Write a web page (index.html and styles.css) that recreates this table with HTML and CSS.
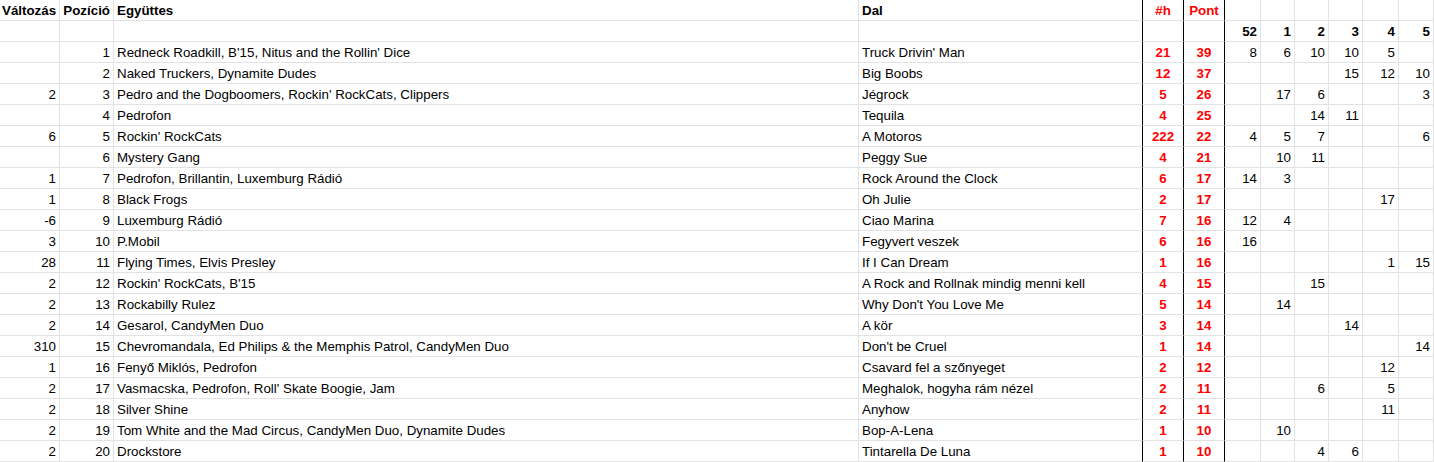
FILE: index.html
```html
<!DOCTYPE html>
<html lang="hu">
<head>
<meta charset="utf-8">
<title>Lista</title>
<link rel="stylesheet" href="styles.css">
</head>
<body>
<div class="sheet">
  <div class="row head">
    <div class="c chg">Változás</div><div class="c pos">Pozíció</div><div class="c band">Együttes</div><div class="c song">Dal</div><div class="c hh">#h</div><div class="c pt">Pont</div><div class="c w"></div><div class="c w"></div><div class="c w"></div><div class="c w"></div><div class="c w"></div><div class="c w"></div>
  </div>
  <div class="row weeks">
    <div class="c chg"></div><div class="c pos"></div><div class="c band"></div><div class="c song"></div><div class="c hh"></div><div class="c pt"></div><div class="c w">52</div><div class="c w">1</div><div class="c w">2</div><div class="c w">3</div><div class="c w">4</div><div class="c w">5</div>
  </div>
  <div class="row">
    <div class="c chg"></div><div class="c pos">1</div><div class="c band">Redneck Roadkill, B'15, Nitus and the Rollin' Dice</div><div class="c song">Truck Drivin' Man</div><div class="c hh">21</div><div class="c pt">39</div><div class="c w">8</div><div class="c w">6</div><div class="c w">10</div><div class="c w">10</div><div class="c w">5</div><div class="c w"></div>
  </div>
  <div class="row">
    <div class="c chg"></div><div class="c pos">2</div><div class="c band">Naked Truckers, Dynamite Dudes</div><div class="c song">Big Boobs</div><div class="c hh">12</div><div class="c pt">37</div><div class="c w"></div><div class="c w"></div><div class="c w"></div><div class="c w">15</div><div class="c w">12</div><div class="c w">10</div>
  </div>
  <div class="row">
    <div class="c chg">2</div><div class="c pos">3</div><div class="c band">Pedro and the Dogboomers, Rockin' RockCats, Clippers</div><div class="c song">Jégrock</div><div class="c hh">5</div><div class="c pt">26</div><div class="c w"></div><div class="c w">17</div><div class="c w">6</div><div class="c w"></div><div class="c w"></div><div class="c w">3</div>
  </div>
  <div class="row">
    <div class="c chg"></div><div class="c pos">4</div><div class="c band">Pedrofon</div><div class="c song">Tequila</div><div class="c hh">4</div><div class="c pt">25</div><div class="c w"></div><div class="c w"></div><div class="c w">14</div><div class="c w">11</div><div class="c w"></div><div class="c w"></div>
  </div>
  <div class="row">
    <div class="c chg">6</div><div class="c pos">5</div><div class="c band">Rockin' RockCats</div><div class="c song">A Motoros</div><div class="c hh">222</div><div class="c pt">22</div><div class="c w">4</div><div class="c w">5</div><div class="c w">7</div><div class="c w"></div><div class="c w"></div><div class="c w">6</div>
  </div>
  <div class="row">
    <div class="c chg"></div><div class="c pos">6</div><div class="c band">Mystery Gang</div><div class="c song">Peggy Sue</div><div class="c hh">4</div><div class="c pt">21</div><div class="c w"></div><div class="c w">10</div><div class="c w">11</div><div class="c w"></div><div class="c w"></div><div class="c w"></div>
  </div>
  <div class="row">
    <div class="c chg">1</div><div class="c pos">7</div><div class="c band">Pedrofon, Brillantin, Luxemburg Rádió</div><div class="c song">Rock Around the Clock</div><div class="c hh">6</div><div class="c pt">17</div><div class="c w">14</div><div class="c w">3</div><div class="c w"></div><div class="c w"></div><div class="c w"></div><div class="c w"></div>
  </div>
  <div class="row">
    <div class="c chg">1</div><div class="c pos">8</div><div class="c band">Black Frogs</div><div class="c song">Oh Julie</div><div class="c hh">2</div><div class="c pt">17</div><div class="c w"></div><div class="c w"></div><div class="c w"></div><div class="c w"></div><div class="c w">17</div><div class="c w"></div>
  </div>
  <div class="row">
    <div class="c chg">-6</div><div class="c pos">9</div><div class="c band">Luxemburg Rádió</div><div class="c song">Ciao Marina</div><div class="c hh">7</div><div class="c pt">16</div><div class="c w">12</div><div class="c w">4</div><div class="c w"></div><div class="c w"></div><div class="c w"></div><div class="c w"></div>
  </div>
  <div class="row">
    <div class="c chg">3</div><div class="c pos">10</div><div class="c band">P.Mobil</div><div class="c song">Fegyvert veszek</div><div class="c hh">6</div><div class="c pt">16</div><div class="c w">16</div><div class="c w"></div><div class="c w"></div><div class="c w"></div><div class="c w"></div><div class="c w"></div>
  </div>
  <div class="row">
    <div class="c chg">28</div><div class="c pos">11</div><div class="c band">Flying Times, Elvis Presley</div><div class="c song">If I Can Dream</div><div class="c hh">1</div><div class="c pt">16</div><div class="c w"></div><div class="c w"></div><div class="c w"></div><div class="c w"></div><div class="c w">1</div><div class="c w">15</div>
  </div>
  <div class="row">
    <div class="c chg">2</div><div class="c pos">12</div><div class="c band">Rockin' RockCats, B'15</div><div class="c song">A Rock and Rollnak mindig menni kell</div><div class="c hh">4</div><div class="c pt">15</div><div class="c w"></div><div class="c w"></div><div class="c w">15</div><div class="c w"></div><div class="c w"></div><div class="c w"></div>
  </div>
  <div class="row">
    <div class="c chg">2</div><div class="c pos">13</div><div class="c band">Rockabilly Rulez</div><div class="c song">Why Don't You Love Me</div><div class="c hh">5</div><div class="c pt">14</div><div class="c w"></div><div class="c w">14</div><div class="c w"></div><div class="c w"></div><div class="c w"></div><div class="c w"></div>
  </div>
  <div class="row">
    <div class="c chg">2</div><div class="c pos">14</div><div class="c band">Gesarol, CandyMen Duo</div><div class="c song">A kör</div><div class="c hh">3</div><div class="c pt">14</div><div class="c w"></div><div class="c w"></div><div class="c w"></div><div class="c w">14</div><div class="c w"></div><div class="c w"></div>
  </div>
  <div class="row">
    <div class="c chg">310</div><div class="c pos">15</div><div class="c band">Chevromandala, Ed Philips &amp; the Memphis Patrol, CandyMen Duo</div><div class="c song">Don't be Cruel</div><div class="c hh">1</div><div class="c pt">14</div><div class="c w"></div><div class="c w"></div><div class="c w"></div><div class="c w"></div><div class="c w"></div><div class="c w">14</div>
  </div>
  <div class="row">
    <div class="c chg">1</div><div class="c pos">16</div><div class="c band">Fenyő Miklós, Pedrofon</div><div class="c song">Csavard fel a szőnyeget</div><div class="c hh">2</div><div class="c pt">12</div><div class="c w"></div><div class="c w"></div><div class="c w"></div><div class="c w"></div><div class="c w">12</div><div class="c w"></div>
  </div>
  <div class="row">
    <div class="c chg">2</div><div class="c pos">17</div><div class="c band">Vasmacska, Pedrofon, Roll' Skate Boogie, Jam</div><div class="c song">Meghalok, hogyha rám nézel</div><div class="c hh">2</div><div class="c pt">11</div><div class="c w"></div><div class="c w"></div><div class="c w">6</div><div class="c w"></div><div class="c w">5</div><div class="c w"></div>
  </div>
  <div class="row">
    <div class="c chg">2</div><div class="c pos">18</div><div class="c band">Silver Shine</div><div class="c song">Anyhow</div><div class="c hh">2</div><div class="c pt">11</div><div class="c w"></div><div class="c w"></div><div class="c w"></div><div class="c w"></div><div class="c w">11</div><div class="c w"></div>
  </div>
  <div class="row">
    <div class="c chg">2</div><div class="c pos">19</div><div class="c band">Tom White and the Mad Circus, CandyMen Duo, Dynamite Dudes</div><div class="c song">Bop-A-Lena</div><div class="c hh">1</div><div class="c pt">10</div><div class="c w"></div><div class="c w">10</div><div class="c w"></div><div class="c w"></div><div class="c w"></div><div class="c w"></div>
  </div>
  <div class="row">
    <div class="c chg">2</div><div class="c pos">20</div><div class="c band">Drockstore</div><div class="c song">Tintarella De Luna</div><div class="c hh">1</div><div class="c pt">10</div><div class="c w"></div><div class="c w"></div><div class="c w">4</div><div class="c w">6</div><div class="c w"></div><div class="c w"></div>
  </div>
</div>
</body>
</html>
```
FILE: styles.css
```css
html, body {
  margin: 0;
  padding: 0;
  background: #ffffff;
}

body {
  font-family: "Liberation Sans", Arial, sans-serif;
  font-size: 13.33px;
  color: #000000;
}

.sheet {
  width: 1434px;
  overflow: hidden;
}

.row {
  display: grid;
  grid-template-columns: 60px 54px 745px 284px 41px 41px 36px 34px 34px 34px 36px 35px;
  height: 21px;
}

.c {
  box-sizing: border-box;
  height: 21px;
  line-height: 20px;
  padding: 1px 3px 0 3px;
  border-right: 1px solid #e2e2e2;
  border-bottom: 1px solid #e2e2e2;
  white-space: nowrap;
  overflow: hidden;
}

.chg, .pos, .w {
  text-align: right;
}

.song {
  border-right-color: #000000;
}

.hh, .pt {
  text-align: center;
  color: #ff0000;
  font-weight: bold;
  border-right-color: #000000;
}

.head .c {
  font-weight: bold;
}

.head .chg {
  text-align: left;
  padding-left: 2px;
}

.weeks .w {
  font-weight: bold;
}
```
